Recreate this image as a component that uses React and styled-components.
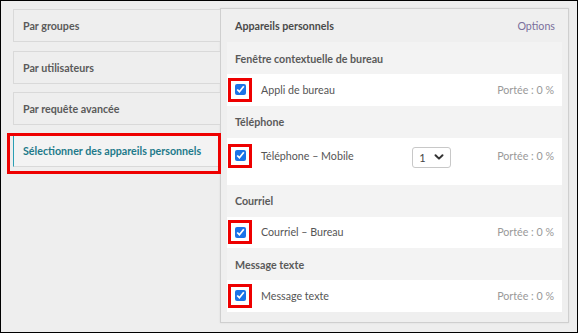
import React from "react";
import styled, { createGlobalStyle } from "styled-components";

const GlobalStyle = createGlobalStyle`
  * { box-sizing: border-box; }
  body {
    margin: 0;
    font-family: Lato, "Open Sans", sans-serif;
    color: #555;
  }
`;

const Frame = styled.div`
  width: 578px;
  height: 333px;
  border: 1px solid #000;
  background: #eeeeee;
  display: flex;
  align-items: flex-start;
  padding: 7px 8px 0 12px;
  overflow: hidden;
`;

const TabList = styled.div`
  width: 207px;
  display: flex;
  flex-direction: column;
  gap: 8.5px;
  padding-top: 1px;
`;

const Tab = styled.div`
  position: relative;
  height: 33px;
  display: flex;
  align-items: center;
  padding-left: 9px;
  font-size: 10.7px;
  font-weight: 700;
  color: ${(p) => (p.active ? "#1e7a8a" : "#5a5a5a")};
  background: ${(p) => (p.active ? "#f3f3f3" : "#eeeeee")};
  border: 1px solid #d9d9d9;
  border-right: none;
  border-left-color: ${(p) => (p.active ? "#2a9fb5" : "#d9d9d9")};

  ${(p) =>
    p.active &&
    `
    &::after {
      content: "";
      position: absolute;
      left: -7px;
      top: -2px;
      width: 208px;
      height: 35px;
      border: 3px solid #ee0000;
    }
  `}
`;

const Panel = styled.div`
  width: 349px;
  height: 315px;
  background: #efefef;
  border: 1px solid #cfcfcf;
  box-shadow: 0 0 2px rgba(0, 0, 0, 0.08);
  padding: 0 6px 8px 6px;
  display: flex;
  flex-direction: column;
`;

const PanelHeader = styled.div`
  height: 33px;
  display: flex;
  align-items: center;
  justify-content: space-between;
  padding: 0 7px 0 8px;
  font-size: 10.7px;
`;

const PanelTitle = styled.span`
  font-weight: 700;
  color: #4a4a4a;
`;

const OptionsLink = styled.span`
  color: #7a6f9c;
`;

const SectionTitle = styled.div`
  height: 32px;
  display: flex;
  align-items: center;
  padding-left: 8px;
  background: #f3f3f3;
  font-size: 10.7px;
  font-weight: 700;
  color: #5a5a5a;
`;

const Row = styled.div`
  height: ${(p) => (p.tall ? "47px" : "31.5px")};
  background: #ffffff;
  display: flex;
  align-items: ${(p) => (p.tall ? "flex-start" : "center")};
  padding: ${(p) => (p.tall ? "6px 8px 0 1px" : "0 8px 0 1px")};
  font-size: 10.7px;
`;

const CheckFrame = styled.span`
  width: 24px;
  height: 24px;
  border: 3px solid #ee0000;
  display: flex;
  align-items: center;
  justify-content: center;
  flex-shrink: 0;

  input {
    margin: 0;
    width: 11px;
    height: 11px;
    accent-color: #1a73e8;
  }
`;

const Label = styled.span`
  margin-left: 9px;
  flex: 1;
  color: #555;
  line-height: 24px;
`;

const Reach = styled.span`
  color: #999;
  line-height: 24px;
`;

const Select = styled.div`
  width: 39px;
  height: 21px;
  margin: 3px 46px 0 0;
  border: 1px solid #c8c8c8;
  border-radius: 3px;
  display: flex;
  align-items: center;
  justify-content: space-between;
  padding: 0 6px 0 6px;
  color: #444;
  font-size: 11px;
  background: #fff;
`;

const Chevron = () => (
  <svg width="10" height="8" viewBox="0 0 10 8">
    <path d="M1.5 2.2 L5 5.6 L8.5 2.2" fill="none" stroke="#333" strokeWidth="2" strokeLinecap="round" strokeLinejoin="round" />
  </svg>
);

const sections = [
  { title: "Fenêtre contextuelle de bureau", label: "Appli de bureau" },
  { title: "Téléphone", label: "Téléphone – Mobile", select: true },
  { title: "Courriel", label: "Courriel – Bureau" },
  { title: "Message texte", label: "Message texte" },
];

const tabs = ["Par groupes", "Par utilisateurs", "Par requête avancée", "Sélectionner des appareils personnels"];

export default function App() {
  return (
    <>
      <GlobalStyle />
      <Frame>
        <TabList>
          {tabs.map((t, i) => (
            <Tab key={t} active={i === 3}>
              {t}
            </Tab>
          ))}
        </TabList>
        <Panel>
          <PanelHeader>
            <PanelTitle>Appareils personnels</PanelTitle>
            <OptionsLink>Options</OptionsLink>
          </PanelHeader>
          {sections.map((s) => (
            <React.Fragment key={s.title}>
              <SectionTitle>{s.title}</SectionTitle>
              <Row tall={s.select}>
                <CheckFrame>
                  <input type="checkbox" checked readOnly />
                </CheckFrame>
                <Label>{s.label}</Label>
                {s.select && (
                  <Select>
                    <span>1</span>
                    <Chevron />
                  </Select>
                )}
                <Reach>Portée : 0 %</Reach>
              </Row>
            </React.Fragment>
          ))}
        </Panel>
      </Frame>
    </>
  );
}
